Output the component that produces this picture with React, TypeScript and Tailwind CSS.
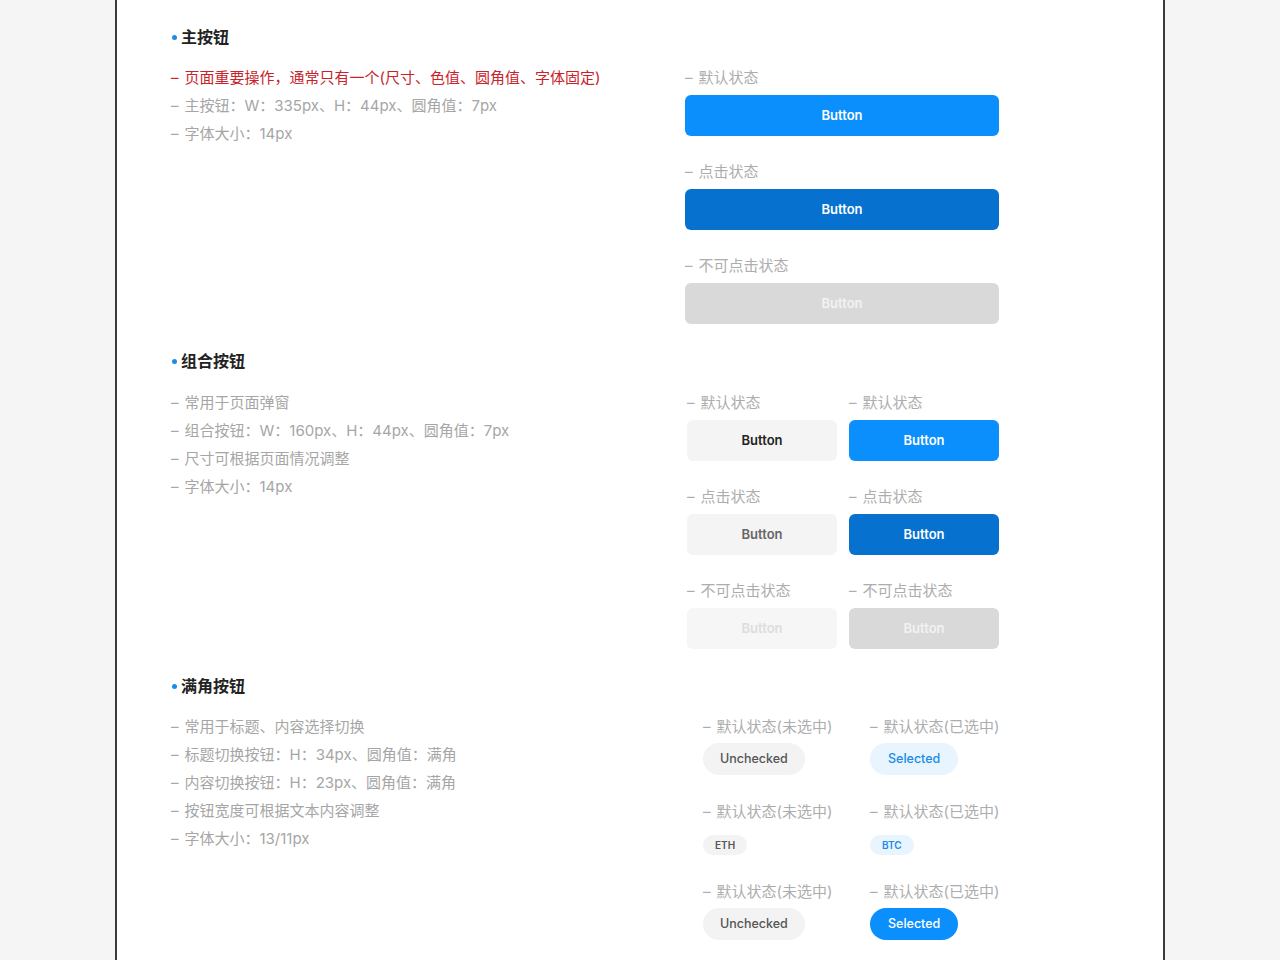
import React from "react";

const Heading = ({ title }: { title: string }) => (
  <div className="flex items-center pl-[55px]">
    <span className="mr-[4px] h-[5px] w-[5px] rounded-full bg-[#1a8ce6]" />
    <span className="text-[16px] font-bold leading-[22px] text-[#222]">{title}</span>
  </div>
);

const Dashed = ({ text }: { text: string }) => (
  <>
    –<span className="ml-[6px]">{text}</span>
  </>
);

const Desc = ({ lines, red }: { lines: string[]; red?: string }) => (
  <div className="flex flex-col text-[15px] leading-[28px] text-[#a6a6a6]">
    {red && (
      <div className="text-[#c8232a]">
        <Dashed text={red} />
      </div>
    )}
    {lines.map((l) => (
      <div key={l}>
        <Dashed text={l} />
      </div>
    ))}
  </div>
);

const Label = ({ text }: { text: string }) => (
  <div className="whitespace-nowrap text-[15px] leading-[28px] text-[#adadad]">
    <Dashed text={text} />
  </div>
);

const btnBase =
  "flex h-[41px] items-center justify-center rounded-[6px] text-[13px] font-semibold";

export default function App() {
  return (
    <div className="h-[960px] overflow-hidden bg-[#f5f5f5] font-[Inter,'Noto_Sans_CJK_SC',sans-serif]">
      <div className="mx-auto h-full w-[1050px] border-x-2 border-[#3a3a3a] bg-white pt-[26px]">
        {/* 主按钮 */}
        <section>
          <Heading title="主按钮" />
          <div className="mt-4 flex">
            <div className="w-[568px] pl-[54px]">
              <Desc
                red="页面重要操作，通常只有一个(尺寸、色值、圆角值、字体固定)"
                lines={["主按钮：W：335px、H：44px、圆角值：7px", "字体大小：14px"]}
              />
            </div>
            <div className="flex flex-col gap-[22px]">
              <div>
                <Label text="默认状态" />
                <div className={`${btnBase} mt-[3px] w-[314px] bg-[#0b8ffc] text-white`}>Button</div>
              </div>
              <div>
                <Label text="点击状态" />
                <div className={`${btnBase} mt-[3px] w-[314px] bg-[#0671cf] text-white`}>Button</div>
              </div>
              <div>
                <Label text="不可点击状态" />
                <div className={`${btnBase} mt-[3px] w-[314px] bg-[#d9d9d9] text-[#f2f2f2]`}>Button</div>
              </div>
            </div>
          </div>
        </section>

        {/* 组合按钮 */}
        <section className="mt-[26px]">
          <Heading title="组合按钮" />
          <div className="mt-[17px] flex">
            <div className="w-[570px] pl-[54px]">
              <Desc
                lines={[
                  "常用于页面弹窗",
                  "组合按钮：W：160px、H：44px、圆角值：7px",
                  "尺寸可根据页面情况调整",
                  "字体大小：14px",
                ]}
              />
            </div>
            <div className="grid grid-cols-[150px_150px] gap-x-[12px] gap-y-[22px]">
              <div>
                <Label text="默认状态" />
                <div className={`${btnBase} mt-[3px] bg-[#f4f4f4] text-[#222]`}>Button</div>
              </div>
              <div>
                <Label text="默认状态" />
                <div className={`${btnBase} mt-[3px] bg-[#0b8ffc] text-white`}>Button</div>
              </div>
              <div>
                <Label text="点击状态" />
                <div className={`${btnBase} mt-[3px] bg-[#f4f4f4] text-[#666]`}>Button</div>
              </div>
              <div>
                <Label text="点击状态" />
                <div className={`${btnBase} mt-[3px] bg-[#0671cf] text-white`}>Button</div>
              </div>
              <div>
                <Label text="不可点击状态" />
                <div className={`${btnBase} mt-[3px] bg-[#f6f6f6] text-[#dddddd]`}>Button</div>
              </div>
              <div>
                <Label text="不可点击状态" />
                <div className={`${btnBase} mt-[3px] bg-[#d9d9d9] text-[#f2f2f2]`}>Button</div>
              </div>
            </div>
          </div>
        </section>

        {/* 满角按钮 */}
        <section className="mt-[26px]">
          <Heading title="满角按钮" />
          <div className="mt-4 flex">
            <div className="w-[586px] pl-[54px]">
              <Desc
                lines={[
                  "常用于标题、内容选择切换",
                  "标题切换按钮：H：34px、圆角值：满角",
                  "内容切换按钮：H：23px、圆角值：满角",
                  "按钮宽度可根据文本内容调整",
                  "字体大小：13/11px",
                ]}
              />
            </div>
            <div className="grid grid-cols-[167px_auto] gap-y-[23px]">
              <div>
                <Label text="默认状态(未选中)" />
                <div className="mt-[2px] flex">
                  <span className="flex h-[32px] items-center rounded-full bg-[#f3f3f3] px-[17px] text-[12.5px] font-medium text-[#555]">
                    Unchecked
                  </span>
                </div>
              </div>
              <div>
                <Label text="默认状态(已选中)" />
                <div className="mt-[2px] flex">
                  <span className="flex h-[32px] items-center rounded-full bg-[#e8f4fe] px-[18px] text-[12.5px] font-medium text-[#1a8ce6]">
                    Selected
                  </span>
                </div>
              </div>
              <div>
                <Label text="默认状态(未选中)" />
                <div className="mt-[9px] flex">
                  <span className="flex h-[20px] items-center rounded-full bg-[#f3f3f3] px-[12px] text-[10px] font-semibold text-[#555]">
                    ETH
                  </span>
                </div>
              </div>
              <div>
                <Label text="默认状态(已选中)" />
                <div className="mt-[9px] flex">
                  <span className="flex h-[20px] items-center rounded-full bg-[#e8f4fe] px-[12px] text-[10px] font-semibold text-[#1a8ce6]">
                    BTC
                  </span>
                </div>
              </div>
              <div>
                <Label text="默认状态(未选中)" />
                <div className="mt-[2px] flex">
                  <span className="flex h-[32px] items-center rounded-full bg-[#f3f3f3] px-[17px] text-[12.5px] font-medium text-[#555]">
                    Unchecked
                  </span>
                </div>
              </div>
              <div>
                <Label text="默认状态(已选中)" />
                <div className="mt-[2px] flex">
                  <span className="flex h-[32px] items-center rounded-full bg-[#0b8ffc] px-[18px] text-[12.5px] font-medium text-white">
                    Selected
                  </span>
                </div>
              </div>
            </div>
          </div>
        </section>
      </div>
    </div>
  );
}
